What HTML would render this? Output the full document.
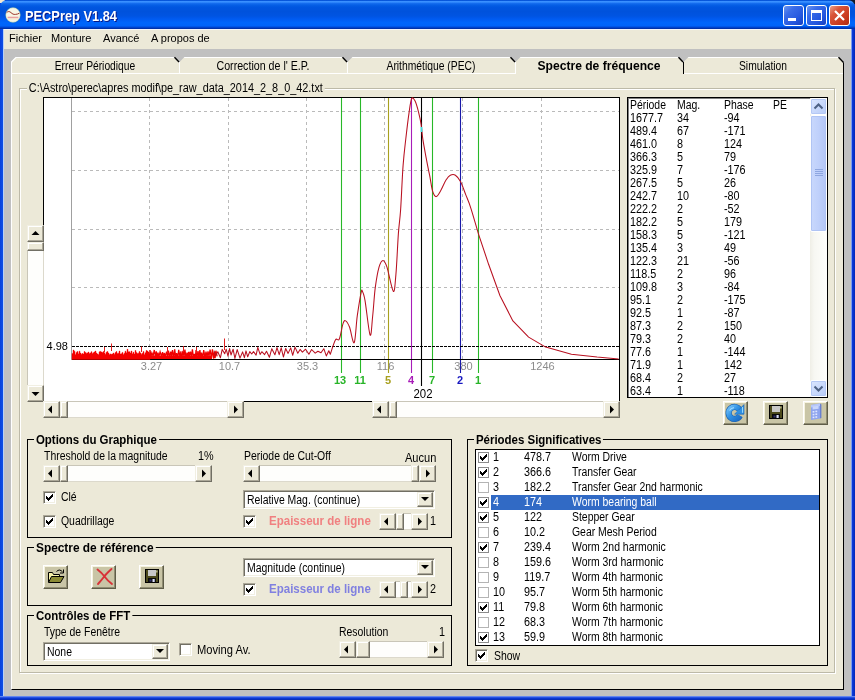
<!DOCTYPE html><html><head><meta charset="utf-8"><title>PECPrep V1.84</title><style>
html,body{margin:0;padding:0;}
body{width:855px;height:700px;overflow:hidden;background:#c0c0c0;position:relative;font-family:"Liberation Sans",sans-serif;font-size:12px;color:#000;}
div{position:absolute;box-sizing:border-box;}
.t{white-space:nowrap;line-height:14px;height:14px;}
.b{font-weight:bold;}
.btn{background:#ece9d8;border:1px solid;border-color:#f1efe2 #716f64 #716f64 #f1efe2;box-shadow:inset -1px -1px 0 #aca899, inset 1px 1px 0 #fff;}
.ibt{background:#c9c5a6;border:1px solid;border-color:#fff #5f5d48 #5f5d48 #fff;box-shadow:inset -1px -1px 0 #8f8c72, inset 1px 1px 0 #f6f3df;}
.trk{background:#fefefc;border-top:1px solid #c9c6b8;border-bottom:1px solid #dcd9cc;}
.vtrk{background:#fefefc;border-left:1px solid #c9c6b8;border-right:1px solid #dcd9cc;}
.sunk{background:#fff;border:1px solid;border-color:#aca899 #fff #fff #aca899;box-shadow:inset 1px 1px 0 #716f64, inset -1px -1px 0 #f1efe2;}
.gb{border:1px solid #000;}
.cap{background:#ece9d8;font-weight:bold;font-size:12px;white-space:nowrap;line-height:14px;height:14px;padding:0 2px;}
.cb{background:#fff;border:1px solid;border-color:#aca899 #fff #fff #aca899;box-shadow:inset 1px 1px 0 #716f64, inset -1px -1px 0 #f1efe2;}
svg{position:absolute;overflow:visible;}
</style></head><body><div id="wrap" style="left:0;top:0;width:855px;height:700px;will-change:transform;">
<div style="left:0;top:0;width:855px;height:700px;background:#0831d9;"></div>
<div style="left:3px;top:29px;width:849px;height:668px;background:#c0c0c0;"></div>
<div style="left:0;top:0;width:4px;height:700px;background:linear-gradient(90deg,#0840dc,#0c4ce4 60%,#1458ec 100%);"></div>
<div style="left:851px;top:29px;width:1px;height:668px;background:#7c9cec;"></div><div style="left:852px;top:0;width:3px;height:700px;background:linear-gradient(90deg,#0c3ce0,#0428b8);"></div>
<div style="left:0;top:696px;width:855px;height:4px;background:linear-gradient(#8aa8f4 0%,#3c64e8 25%,#0c3cdc 50%,#0428b0 100%);"></div>
<div style="left:0;top:0;width:5px;height:3px;background:#f4e8d0;"></div><div style="left:850px;top:0;width:5px;height:4px;background:#101828;"></div>
<div style="left:0;top:0;width:855px;height:29px;background:linear-gradient(#0050d0 0%,#0a5ae0 2.5%,#3a90ff 5%,#3088fc 8%,#146cee 12%,#0660e6 17%,#0056e0 24%,#0052dc 40%,#0054e2 55%,#005af0 65%,#0066fc 78%,#0064fa 88%,#0054e6 92%,#003cc0 96%,#002a98 100%);border-radius:7px 7px 0 0;"></div>
<svg style="left:5px;top:7px" width="16" height="16" viewBox="0 0 16 16"><circle cx="8" cy="8" r="7.4" fill="#f8f6e6" stroke="#5c9a86" stroke-opacity="0.55" stroke-width="0.7"/><path d="M1.6 5.6 C3 4.2,4.6 4.2,6 5.6 S8.6 7.6,10.4 7.4 S13 7,14.4 6.2" stroke="#9c3428" stroke-width="1" fill="none"/><path d="M2.6 10.5 H13.4" stroke="#eaa0a0" stroke-width="1.6"/><path d="M3 12.2 H13" stroke="#f4ecd0" stroke-width="1"/></svg>
<div class="t" style="left:25px;top:8px;transform:scaleX(0.916);transform-origin:0 0;color:#fff;font-weight:bold;font-size:14px;line-height:16px;height:16px;text-shadow:1px 1px 0 #0a1883;">PECPrep V1.84</div>
<div style="left:783px;top:5px;width:21px;height:21px;border:1px solid #fff;border-radius:3px;background:linear-gradient(135deg,#6a96f0 0%,#3a6ce8 30%,#2456de 70%,#1840c0 100%);"></div>
<div style="left:806px;top:5px;width:21px;height:21px;border:1px solid #fff;border-radius:3px;background:linear-gradient(135deg,#6a96f0 0%,#3a6ce8 30%,#2456de 70%,#1840c0 100%);"></div>
<div style="left:829px;top:5px;width:21px;height:21px;border:1px solid #fff;border-radius:3px;background:linear-gradient(135deg,#e9a08a 0%,#d9553a 30%,#c93a1e 70%,#b02c12 100%);"></div>
<div style="left:788px;top:18px;width:8px;height:3px;background:#fff;"></div>
<div style="left:811px;top:10px;width:11px;height:11px;border:1px solid #fff;border-top-width:3px;"></div>
<svg style="left:829px;top:5px" width="21" height="21"><path d="M6 6 L15 15 M15 6 L6 15" stroke="#fff" stroke-width="2.2" stroke-linecap="butt"/></svg>
<div class="" style="left:4px;top:29px;width:847px;height:20px;background:#ece9d8;border-top:1px solid #f4f6fb;"></div>
<div style="left:3px;top:29px;width:1px;height:667px;background:#b8d0f8;"></div>
<div class="t" style="left:9px;top:31px;font-size:11px;">Fichier</div>
<div class="t" style="left:51px;top:31px;font-size:11px;">Monture</div>
<div class="t" style="left:103px;top:31px;font-size:11px;">Avancé</div>
<div class="t" style="left:151px;top:31px;font-size:11px;">A propos de</div>
<div class="" style="left:11px;top:73px;width:833px;height:617px;background:#ece9d8;border:1px solid;border-color:#ece9d8 #000 #000 #fff;"></div>
<div class="" style="left:11px;top:57px;width:833px;height:17px;background:#ece9d8;"></div>
<div class="" style="left:11px;top:57px;width:833px;height:1px;background:#fff;"></div>
<div class="" style="left:11px;top:57px;width:1px;height:17px;background:#fff;"></div>
<div class="" style="left:11px;top:73px;width:504px;height:1px;background:#fff;"></div>
<div class="" style="left:684px;top:73px;width:159px;height:1px;background:#fff;"></div>
<div class="t" style="left:11px;top:59px;width:168px;text-align:center;transform:scaleX(0.856);transform-origin:50% 0;">Erreur Périodique</div>
<div class="t" style="left:179px;top:59px;width:168px;text-align:center;transform:scaleX(0.888);transform-origin:50% 0;">Correction de l' E.P.</div>
<div class="t" style="left:347px;top:59px;width:168px;text-align:center;transform:scaleX(0.861);transform-origin:50% 0;">Arithmétique (PEC)</div>
<div class="t" style="left:515px;top:59px;width:168px;text-align:center;transform:scaleX(1.008);transform-origin:50% 0;font-weight:bold;">Spectre de fréquence</div>
<div class="t" style="left:683px;top:59px;width:160px;text-align:center;transform:scaleX(0.857);transform-origin:50% 0;">Simulation</div>
<svg style="left:0;top:0" width="855" height="700"><path d="M173.5 57 H184.5 L179 62.5 Z" fill="#c0c0c0"/><path d="M174.5 57.2 L179 62" stroke="#000" stroke-width="1.3"/><path d="M179.5 62 V74" stroke="#fff" stroke-width="1"/><path d="M341.5 57 H352.5 L347 62.5 Z" fill="#c0c0c0"/><path d="M342.5 57.2 L347 62" stroke="#000" stroke-width="1.3"/><path d="M347.5 62 V74" stroke="#fff" stroke-width="1"/><path d="M509.5 57 H520.5 L515 62.5 Z" fill="#c0c0c0"/><path d="M510.5 57.2 L515 62" stroke="#000" stroke-width="1.3"/><path d="M515.5 62 V74" stroke="#fff" stroke-width="1"/><path d="M677.5 57 H688.5 L683 62.5 Z" fill="#c0c0c0"/><path d="M678.5 57.2 L683 62" stroke="#000" stroke-width="1.3"/><path d="M683.5 62 V74" stroke="#000" stroke-width="1"/><path d="M11 57 H16 L11 62 Z" fill="#c0c0c0"/><path d="M11.5 62 L16 57.5" stroke="#fff" stroke-width="1.2"/><path d="M843.5 62 V74" stroke="#000" stroke-width="1"/><path d="M838 57 H844 V63 Z" fill="#c0c0c0"/><path d="M838.5 57.2 L843.5 62.5" stroke="#000" stroke-width="1.3"/></svg>
<div class="" style="left:19px;top:88px;width:816px;height:585px;border:1px solid #bdbaa8;box-shadow:1px 1px 0 #fff, inset 1px 1px 0 #fff;"></div>
<div class="t" style="left:27px;top:81px;transform:scaleX(0.905);transform-origin:0 0;background:#ece9d8;padding:0 2px;font-size:12px;">C:\Astro\perec\apres modif\pe_raw_data_2014_2_8_0_42.txt</div>
<div class="" style="left:43px;top:97px;width:577px;height:305px;background:#fff;border:1px solid #000;"></div>
<svg style="left:0;top:0" width="855" height="700" viewBox="0 0 855 700"><path d="M72 111.5 H619" stroke="#bababa" stroke-width="1" stroke-dasharray="3 3"/><path d="M72 170.5 H619" stroke="#bababa" stroke-width="1" stroke-dasharray="3 3"/><path d="M72 229.5 H619" stroke="#bababa" stroke-width="1" stroke-dasharray="3 3"/><path d="M72 287.5 H619" stroke="#bababa" stroke-width="1" stroke-dasharray="3 3"/><path d="M149.5 98 V359" stroke="#bababa" stroke-width="1" stroke-dasharray="3 3"/><path d="M228.5 98 V359" stroke="#bababa" stroke-width="1" stroke-dasharray="3 3"/><path d="M306.5 98 V359" stroke="#bababa" stroke-width="1" stroke-dasharray="3 3"/><path d="M384.5 98 V359" stroke="#bababa" stroke-width="1" stroke-dasharray="3 3"/><path d="M462.5 98 V359" stroke="#bababa" stroke-width="1" stroke-dasharray="3 3"/><path d="M541.5 98 V359" stroke="#bababa" stroke-width="1" stroke-dasharray="3 3"/><path d="M71.5 98 V360" stroke="#a0a0a0" stroke-width="1"/><path d="M341.5 98 V373" stroke="#28b828" stroke-width="1.1"/><path d="M360.5 98 V373" stroke="#28b828" stroke-width="1.1"/><path d="M388.5 98 V373" stroke="#a8a020" stroke-width="1.1"/><path d="M411.5 98 V373" stroke="#a81cb8" stroke-width="1.1"/><path d="M421.5 98 V386" stroke="#000" stroke-width="1.1"/><path d="M432.5 98 V373" stroke="#28b828" stroke-width="1.1"/><path d="M460.5 98 V373" stroke="#1818a8" stroke-width="1.1"/><path d="M478.5 98 V373" stroke="#28b828" stroke-width="1.1"/><path d="M72 359.5 H619" stroke="#000" stroke-width="1"/><path d="M72 346.5 H619" stroke="#000" stroke-width="1" stroke-dasharray="3 1"/><path d="M72 359.5 L72.0 353.4 L73.0 353.4 L73.0 350.1 L74.0 350.1 L74.0 351.2 L75.0 351.2 L75.0 354.4 L76.0 354.4 L76.0 352.4 L77.0 352.4 L77.0 351.6 L78.0 351.6 L78.0 353.7 L79.0 353.7 L79.0 351.2 L80.0 351.2 L80.0 353.1 L81.0 353.1 L81.0 354.3 L82.0 354.3 L82.0 353.5 L83.0 353.5 L83.0 354.1 L84.0 354.1 L84.0 351.6 L85.0 351.6 L85.0 352.5 L86.0 352.5 L86.0 353.2 L87.0 353.2 L87.0 352.9 L88.0 352.9 L88.0 352.1 L89.0 352.1 L89.0 353.4 L90.0 353.4 L90.0 352.9 L91.0 352.9 L91.0 351.7 L92.0 351.7 L92.0 353.6 L93.0 353.6 L93.0 352.7 L94.0 352.7 L94.0 351.9 L95.0 351.9 L95.0 351.1 L96.0 351.1 L96.0 353.0 L97.0 353.0 L97.0 354.0 L98.0 354.0 L98.0 354.4 L99.0 354.4 L99.0 351.8 L100.0 351.8 L100.0 351.4 L101.0 351.4 L101.0 352.1 L102.0 352.1 L102.0 352.5 L103.0 352.5 L103.0 351.6 L104.0 351.6 L104.0 352.8 L105.0 352.8 L105.0 354.3 L106.0 354.3 L106.0 352.2 L107.0 352.2 L107.0 351.6 L108.0 351.6 L108.0 353.1 L109.0 353.1 L109.0 354.4 L110.0 354.4 L110.0 353.9 L111.0 353.9 L111.0 354.3 L112.0 354.3 L112.0 354.0 L113.0 354.0 L113.0 353.1 L114.0 353.1 L114.0 354.2 L115.0 354.2 L115.0 352.6 L116.0 352.6 L116.0 351.6 L117.0 351.6 L117.0 353.5 L118.0 353.5 L118.0 353.2 L119.0 353.2 L119.0 351.1 L120.0 351.1 L120.0 353.9 L121.0 353.9 L121.0 353.7 L122.0 353.7 L122.0 352.4 L123.0 352.4 L123.0 354.5 L124.0 354.5 L124.0 353.2 L125.0 353.2 L125.0 351.2 L126.0 351.2 L126.0 352.7 L127.0 352.7 L127.0 349.3 L128.0 349.3 L128.0 351.8 L129.0 351.8 L129.0 351.7 L130.0 351.7 L130.0 353.1 L131.0 353.1 L131.0 351.1 L132.0 351.1 L132.0 353.8 L133.0 353.8 L133.0 352.3 L134.0 352.3 L134.0 354.0 L135.0 354.0 L135.0 350.5 L136.0 350.5 L136.0 352.4 L137.0 352.4 L137.0 353.6 L138.0 353.6 L138.0 353.2 L139.0 353.2 L139.0 351.5 L140.0 351.5 L140.0 352.9 L141.0 352.9 L141.0 354.2 L142.0 354.2 L142.0 353.3 L143.0 353.3 L143.0 351.6 L144.0 351.6 L144.0 354.4 L145.0 354.4 L145.0 352.7 L146.0 352.7 L146.0 350.5 L147.0 350.5 L147.0 351.1 L148.0 351.1 L148.0 352.1 L149.0 352.1 L149.0 353.2 L150.0 353.2 L150 359.5 Z" fill="#f40000" stroke="#f40000" stroke-width="0.4"/><path d="M150 359 L150.0 350.1 L151.0 356.7 L151.9 352.9 L153.1 356.0 L154.3 350.0 L155.5 356.8 L156.3 351.4 L157.3 358.9 L158.0 352.6 L158.8 356.9 L160.1 351.8 L161.4 356.0 L162.6 352.2 L163.5 358.3 L164.3 353.0 L165.4 356.3 L166.6 351.6 L167.7 356.6 L168.4 350.7 L169.7 356.7 L170.8 351.6 L171.6 356.6 L172.5 350.0 L173.8 357.8 L174.7 349.3 L175.9 358.5 L176.6 353.2 L177.9 356.6 L178.7 349.9 L180.0 357.0 L180.9 351.3 L181.7 359.0 L182.9 350.8 L184.0 356.2 L184.9 349.6 L186.1 358.4 L187.0 352.5 L187.8 357.2 L188.7 351.9 L189.4 356.3 L190.4 351.7 L191.4 356.3 L192.4 349.4 L193.4 357.4 L194.4 353.9 L195.3 358.5 L196.0 350.0 L196.8 357.6 L198.0 351.2 L198.9 357.4 L199.9 350.1 L200.7 357.3 L201.5 352.6 L202.7 357.5 L203.7 350.2 L205.0 357.7 L206.0 351.5 L207.0 356.9 L208.0 351.3 L209.0 356.2 L210.1 349.6 L211.4 358.2 L212.4 349.3 L213.6 358.6 L214.4 351.8 L215.1 358.3 L215.9 350.7 L217.1 356.3" fill="none" stroke="#f00000" stroke-width="1.3"/><rect x="150" y="355.5" width="62" height="3.5" fill="#f40000"/><path d="M111.5 351 V343.5 M224.5 350 V338.5 M104.5 352 V347 M141.5 352 V346.5 M167.5 352 V347 M183.5 352 V346 M196.5 352 V347" stroke="#e02020" stroke-width="1"/><path d="M214.0 350.6 L215.4 355.7 L217.8 351.8 L220.4 357.8 L222.2 349.4 L224.7 353.8 L226.2 349.2 L228.0 356.1 L229.6 348.6 L231.0 355.0 L233.1 349.2 L234.9 358.4 L237.2 349.6 L240.0 358.1 L242.6 351.9 L244.4 357.7 L246.0 350.9 L247.7 356.8 L249.8 351.6 L251.7 354.0 L253.5 351.6 L256.1 355.1 L257.8 347.3 L260.1 354.4 L261.8 351.7 L264.6 354.6 L266.5 351.3 L269.4 357.3 L271.8 348.7 L274.9 354.8 L277.0 347.6 L279.2 354.7 L281.2 347.8 L283.4 357.0 L285.7 348.5 L288.1 353.4 L290.7 347.9 L292.7 355.3 L295.0 347.1 L297.8 353.3 L300.1 349.4 L302.4 352.1 L305.6 349.2 L308.9 354.2 L311.6 349.5 L315.2 353.1 L317.9 351.2 L321.0 352.8 L323.8 348.7 L326.3 355.9 L328.8 350.7 L330.3 354.3  C331.1 351.9,333.9 342.6,335.4 340.0 C336.9 337.4,338.0 341.8,339.3 339.0 C340.6 336.2,342.0 326.4,343.1 323.4 C344.2 320.4,344.6 320.2,345.7 320.9 C346.8 321.5,348.2 323.7,349.6 327.3 C351.0 330.9,352.9 344.6,354.2 342.7 C355.5 340.8,356.1 324.0,357.3 315.7 C358.5 307.4,360.2 296.7,361.1 292.6 C362.0 288.5,361.8 290.0,362.4 291.3 C363.0 292.6,363.7 293.0,365.0 300.3 C366.3 307.6,368.8 332.4,370.1 335.0 C371.4 337.6,371.8 323.6,372.7 315.7 C373.6 307.8,374.2 295.5,375.3 287.4 C376.4 279.3,377.8 271.4,379.1 266.9 C380.4 262.4,381.7 260.4,383.0 260.4 C384.3 260.4,385.2 261.8,386.9 266.9 C388.6 272.0,391.8 290.0,393.3 291.3 C394.8 292.6,395.0 284.2,395.9 274.6 C396.8 265.0,397.6 244.2,398.4 233.4 C399.2 222.6,399.8 221.3,400.6 210.0 C401.4 198.7,402.2 177.1,403.1 165.4 C404.0 153.7,404.7 148.5,405.7 139.7 C406.7 130.8,408.1 119.1,409.1 112.3 C410.1 105.5,410.7 100.5,411.7 98.6 C412.7 96.7,414.0 98.8,415.1 101.1 C416.2 103.4,417.6 108.4,418.6 112.3 C419.6 116.2,420.4 119.7,421.1 124.3 C421.8 128.9,422.0 134.0,422.9 139.7 C423.8 145.4,425.2 152.6,426.3 158.6 C427.4 164.6,428.6 170.3,429.7 175.7 C430.8 181.1,431.5 187.6,432.6 191.1 C433.7 194.6,434.8 196.7,436.2 196.6 C437.6 196.5,439.3 193.1,440.9 190.3 C442.5 187.5,444.4 182.5,446.0 180.0 C447.6 177.5,448.7 176.0,450.3 175.2 C451.9 174.4,453.7 174.1,455.4 175.2 C457.1 176.3,458.9 178.5,460.6 181.7 C462.3 184.9,464.0 190.2,465.7 194.6 C467.4 199.0,468.8 201.7,470.9 208.3 C473.0 214.9,477.3 230.0,478.6 234.3 L488.6 264.3 L500 295.7 L512.9 320.9 L528.6 337.1 L545.7 347.1 L571.4 354.3 L597.1 357.1 L618.6 358.9" stroke="#b81020" stroke-width="1.05" fill="none" stroke-linejoin="round"/><rect x="420.6" y="127" width="1.8" height="5" fill="#40e0e0"/></svg>
<div class="t" style="left:44px;top:339px;font-size:11px;width:24px;text-align:right;">4.98</div>
<div class="t" style="left:131.5px;top:359px;font-size:11px;width:40px;text-align:center;color:#8c8c8c;">3.27</div>
<div class="t" style="left:209.5px;top:359px;font-size:11px;width:40px;text-align:center;color:#8c8c8c;">10.7</div>
<div class="t" style="left:287.5px;top:359px;font-size:11px;width:40px;text-align:center;color:#8c8c8c;">35.3</div>
<div class="t" style="left:365.5px;top:359px;font-size:11px;width:40px;text-align:center;color:#8c8c8c;">116</div>
<div class="t" style="left:443.5px;top:359px;font-size:11px;width:40px;text-align:center;color:#8c8c8c;">380</div>
<div class="t" style="left:522.5px;top:359px;font-size:11px;width:40px;text-align:center;color:#8c8c8c;">1246</div>
<div class="t" style="left:325px;top:373px;font-size:11px;width:30px;text-align:center;color:#28b428;font-weight:bold;">13</div>
<div class="t" style="left:345px;top:373px;font-size:11px;width:30px;text-align:center;color:#28b428;font-weight:bold;">11</div>
<div class="t" style="left:373px;top:373px;font-size:11px;width:30px;text-align:center;color:#a8a020;font-weight:bold;">5</div>
<div class="t" style="left:396px;top:373px;font-size:11px;width:30px;text-align:center;color:#a81cb8;font-weight:bold;">4</div>
<div class="t" style="left:417px;top:373px;font-size:11px;width:30px;text-align:center;color:#28b428;font-weight:bold;">7</div>
<div class="t" style="left:445px;top:373px;font-size:11px;width:30px;text-align:center;color:#1818c0;font-weight:bold;">2</div>
<div class="t" style="left:463px;top:373px;font-size:11px;width:30px;text-align:center;color:#28b428;font-weight:bold;">1</div>
<div class="t" style="left:402.5px;top:387px;transform:scaleX(0.95);transform-origin:50% 0;font-size:12px;width:40px;text-align:center;">202</div>
<div class="vtrk" style="left:27px;top:225px;width:17px;height:177px;"></div>
<div class="btn" style="left:27px;top:225px;width:17px;height:17px;"></div>
<svg style="left:0;top:0" width="855" height="700"><path d="M31.5 235.0 L35.5 231.0 L39.5 235.0 Z" fill="#000"/></svg>
<div class="btn" style="left:27px;top:385px;width:17px;height:17px;"></div>
<svg style="left:0;top:0" width="855" height="700"><path d="M31.5 392.0 L35.5 396.0 L39.5 392.0 Z" fill="#000"/></svg>
<div class="btn" style="left:27px;top:242px;width:17px;height:9px;"></div>
<div class="trk" style="left:43px;top:401px;width:201px;height:17px;"></div>
<div class="btn" style="left:43px;top:401px;width:17px;height:17px;"></div>
<svg style="left:0;top:0" width="855" height="700"><path d="M52.0 405.5 L48.0 409.5 L52.0 413.5 Z" fill="#000"/></svg>
<div class="btn" style="left:227px;top:401px;width:17px;height:17px;"></div>
<svg style="left:0;top:0" width="855" height="700"><path d="M234.0 405.5 L238.0 409.5 L234.0 413.5 Z" fill="#000"/></svg>
<div class="btn" style="left:60px;top:401px;width:8px;height:17px;"></div>
<div class="trk" style="left:372px;top:401px;width:248px;height:17px;"></div>
<div class="btn" style="left:372px;top:401px;width:17px;height:17px;"></div>
<svg style="left:0;top:0" width="855" height="700"><path d="M381.0 405.5 L377.0 409.5 L381.0 413.5 Z" fill="#000"/></svg>
<div class="btn" style="left:603px;top:401px;width:17px;height:17px;"></div>
<svg style="left:0;top:0" width="855" height="700"><path d="M610.0 405.5 L614.0 409.5 L610.0 413.5 Z" fill="#000"/></svg>
<div class="btn" style="left:389px;top:401px;width:8px;height:17px;"></div>
<div class="" style="left:627px;top:97px;width:201px;height:301px;background:#fff;border:1px solid #000;box-shadow:inset 1px 1px 0 #808080;"></div>
<div class="t" style="left:630px;top:98px;transform:scaleX(0.87);transform-origin:0 0;font-size:12px;">Période</div>
<div class="t" style="left:677px;top:98px;transform:scaleX(0.87);transform-origin:0 0;font-size:12px;">Mag.</div>
<div class="t" style="left:724px;top:98px;transform:scaleX(0.87);transform-origin:0 0;font-size:12px;">Phase</div>
<div class="t" style="left:773px;top:98px;transform:scaleX(0.87);transform-origin:0 0;font-size:12px;">PE</div>
<div class="t" style="left:630px;top:111px;transform:scaleX(0.9);transform-origin:0 0;font-size:12px;">1677.7</div>
<div class="t" style="left:677px;top:111px;transform:scaleX(0.9);transform-origin:0 0;font-size:12px;">34</div>
<div class="t" style="left:724px;top:111px;transform:scaleX(0.9);transform-origin:0 0;font-size:12px;">-94</div>
<div class="t" style="left:630px;top:124px;transform:scaleX(0.9);transform-origin:0 0;font-size:12px;">489.4</div>
<div class="t" style="left:677px;top:124px;transform:scaleX(0.9);transform-origin:0 0;font-size:12px;">67</div>
<div class="t" style="left:724px;top:124px;transform:scaleX(0.9);transform-origin:0 0;font-size:12px;">-171</div>
<div class="t" style="left:630px;top:137px;transform:scaleX(0.9);transform-origin:0 0;font-size:12px;">461.0</div>
<div class="t" style="left:677px;top:137px;transform:scaleX(0.9);transform-origin:0 0;font-size:12px;">8</div>
<div class="t" style="left:724px;top:137px;transform:scaleX(0.9);transform-origin:0 0;font-size:12px;">124</div>
<div class="t" style="left:630px;top:150px;transform:scaleX(0.9);transform-origin:0 0;font-size:12px;">366.3</div>
<div class="t" style="left:677px;top:150px;transform:scaleX(0.9);transform-origin:0 0;font-size:12px;">5</div>
<div class="t" style="left:724px;top:150px;transform:scaleX(0.9);transform-origin:0 0;font-size:12px;">79</div>
<div class="t" style="left:630px;top:163px;transform:scaleX(0.9);transform-origin:0 0;font-size:12px;">325.9</div>
<div class="t" style="left:677px;top:163px;transform:scaleX(0.9);transform-origin:0 0;font-size:12px;">7</div>
<div class="t" style="left:724px;top:163px;transform:scaleX(0.9);transform-origin:0 0;font-size:12px;">-176</div>
<div class="t" style="left:630px;top:176px;transform:scaleX(0.9);transform-origin:0 0;font-size:12px;">267.5</div>
<div class="t" style="left:677px;top:176px;transform:scaleX(0.9);transform-origin:0 0;font-size:12px;">5</div>
<div class="t" style="left:724px;top:176px;transform:scaleX(0.9);transform-origin:0 0;font-size:12px;">26</div>
<div class="t" style="left:630px;top:189px;transform:scaleX(0.9);transform-origin:0 0;font-size:12px;">242.7</div>
<div class="t" style="left:677px;top:189px;transform:scaleX(0.9);transform-origin:0 0;font-size:12px;">10</div>
<div class="t" style="left:724px;top:189px;transform:scaleX(0.9);transform-origin:0 0;font-size:12px;">-80</div>
<div class="t" style="left:630px;top:202px;transform:scaleX(0.9);transform-origin:0 0;font-size:12px;">222.2</div>
<div class="t" style="left:677px;top:202px;transform:scaleX(0.9);transform-origin:0 0;font-size:12px;">2</div>
<div class="t" style="left:724px;top:202px;transform:scaleX(0.9);transform-origin:0 0;font-size:12px;">-52</div>
<div class="t" style="left:630px;top:215px;transform:scaleX(0.9);transform-origin:0 0;font-size:12px;">182.2</div>
<div class="t" style="left:677px;top:215px;transform:scaleX(0.9);transform-origin:0 0;font-size:12px;">5</div>
<div class="t" style="left:724px;top:215px;transform:scaleX(0.9);transform-origin:0 0;font-size:12px;">179</div>
<div class="t" style="left:630px;top:228px;transform:scaleX(0.9);transform-origin:0 0;font-size:12px;">158.3</div>
<div class="t" style="left:677px;top:228px;transform:scaleX(0.9);transform-origin:0 0;font-size:12px;">5</div>
<div class="t" style="left:724px;top:228px;transform:scaleX(0.9);transform-origin:0 0;font-size:12px;">-121</div>
<div class="t" style="left:630px;top:241px;transform:scaleX(0.9);transform-origin:0 0;font-size:12px;">135.4</div>
<div class="t" style="left:677px;top:241px;transform:scaleX(0.9);transform-origin:0 0;font-size:12px;">3</div>
<div class="t" style="left:724px;top:241px;transform:scaleX(0.9);transform-origin:0 0;font-size:12px;">49</div>
<div class="t" style="left:630px;top:254px;transform:scaleX(0.9);transform-origin:0 0;font-size:12px;">122.3</div>
<div class="t" style="left:677px;top:254px;transform:scaleX(0.9);transform-origin:0 0;font-size:12px;">21</div>
<div class="t" style="left:724px;top:254px;transform:scaleX(0.9);transform-origin:0 0;font-size:12px;">-56</div>
<div class="t" style="left:630px;top:267px;transform:scaleX(0.9);transform-origin:0 0;font-size:12px;">118.5</div>
<div class="t" style="left:677px;top:267px;transform:scaleX(0.9);transform-origin:0 0;font-size:12px;">2</div>
<div class="t" style="left:724px;top:267px;transform:scaleX(0.9);transform-origin:0 0;font-size:12px;">96</div>
<div class="t" style="left:630px;top:280px;transform:scaleX(0.9);transform-origin:0 0;font-size:12px;">109.8</div>
<div class="t" style="left:677px;top:280px;transform:scaleX(0.9);transform-origin:0 0;font-size:12px;">3</div>
<div class="t" style="left:724px;top:280px;transform:scaleX(0.9);transform-origin:0 0;font-size:12px;">-84</div>
<div class="t" style="left:630px;top:293px;transform:scaleX(0.9);transform-origin:0 0;font-size:12px;">95.1</div>
<div class="t" style="left:677px;top:293px;transform:scaleX(0.9);transform-origin:0 0;font-size:12px;">2</div>
<div class="t" style="left:724px;top:293px;transform:scaleX(0.9);transform-origin:0 0;font-size:12px;">-175</div>
<div class="t" style="left:630px;top:306px;transform:scaleX(0.9);transform-origin:0 0;font-size:12px;">92.5</div>
<div class="t" style="left:677px;top:306px;transform:scaleX(0.9);transform-origin:0 0;font-size:12px;">1</div>
<div class="t" style="left:724px;top:306px;transform:scaleX(0.9);transform-origin:0 0;font-size:12px;">-87</div>
<div class="t" style="left:630px;top:319px;transform:scaleX(0.9);transform-origin:0 0;font-size:12px;">87.3</div>
<div class="t" style="left:677px;top:319px;transform:scaleX(0.9);transform-origin:0 0;font-size:12px;">2</div>
<div class="t" style="left:724px;top:319px;transform:scaleX(0.9);transform-origin:0 0;font-size:12px;">150</div>
<div class="t" style="left:630px;top:332px;transform:scaleX(0.9);transform-origin:0 0;font-size:12px;">79.3</div>
<div class="t" style="left:677px;top:332px;transform:scaleX(0.9);transform-origin:0 0;font-size:12px;">2</div>
<div class="t" style="left:724px;top:332px;transform:scaleX(0.9);transform-origin:0 0;font-size:12px;">40</div>
<div class="t" style="left:630px;top:345px;transform:scaleX(0.9);transform-origin:0 0;font-size:12px;">77.6</div>
<div class="t" style="left:677px;top:345px;transform:scaleX(0.9);transform-origin:0 0;font-size:12px;">1</div>
<div class="t" style="left:724px;top:345px;transform:scaleX(0.9);transform-origin:0 0;font-size:12px;">-144</div>
<div class="t" style="left:630px;top:358px;transform:scaleX(0.9);transform-origin:0 0;font-size:12px;">71.9</div>
<div class="t" style="left:677px;top:358px;transform:scaleX(0.9);transform-origin:0 0;font-size:12px;">1</div>
<div class="t" style="left:724px;top:358px;transform:scaleX(0.9);transform-origin:0 0;font-size:12px;">142</div>
<div class="t" style="left:630px;top:371px;transform:scaleX(0.9);transform-origin:0 0;font-size:12px;">68.4</div>
<div class="t" style="left:677px;top:371px;transform:scaleX(0.9);transform-origin:0 0;font-size:12px;">2</div>
<div class="t" style="left:724px;top:371px;transform:scaleX(0.9);transform-origin:0 0;font-size:12px;">27</div>
<div class="t" style="left:630px;top:384px;transform:scaleX(0.9);transform-origin:0 0;font-size:12px;">63.4</div>
<div class="t" style="left:677px;top:384px;transform:scaleX(0.9);transform-origin:0 0;font-size:12px;">1</div>
<div class="t" style="left:724px;top:384px;transform:scaleX(0.9);transform-origin:0 0;font-size:12px;">-118</div>
<div class="" style="left:810px;top:98px;width:17px;height:299px;background:linear-gradient(90deg,#efeee6 0,#f7f7f2 25%,#fefefb 100%);"></div>
<div class="" style="left:810px;top:98px;width:17px;height:17px;background:linear-gradient(135deg,#dbe6ff,#b8ccf8);border:1px solid #fff;border-radius:2px;box-shadow:inset 0 0 0 1px #b5c8f5;"></div>
<div class="" style="left:810px;top:380px;width:17px;height:17px;background:linear-gradient(135deg,#dbe6ff,#b8ccf8);border:1px solid #fff;border-radius:2px;box-shadow:inset 0 0 0 1px #b5c8f5;"></div>
<svg style="left:810px;top:98px" width="17" height="17"><path d="M4.5 10.5 L8.5 6.5 L12.5 10.5" stroke="#4d6185" stroke-width="2" fill="none"/></svg>
<svg style="left:810px;top:380px" width="17" height="17"><path d="M4.5 6.5 L8.5 10.5 L12.5 6.5" stroke="#4d6185" stroke-width="2" fill="none"/></svg>
<div class="" style="left:810px;top:115px;width:17px;height:117px;background:linear-gradient(90deg,#c9d8fc,#bfd0fb 50%,#b4c6f6);border:1px solid #fff;border-radius:2px;box-shadow:inset 0 0 0 1px #b0c4f4;"></div>
<div class="" style="left:814.5px;top:169px;width:8px;height:1px;background:#8ea6e0;"></div>
<div class="" style="left:814.5px;top:171px;width:8px;height:1px;background:#8ea6e0;"></div>
<div class="" style="left:814.5px;top:173px;width:8px;height:1px;background:#8ea6e0;"></div>
<div class="" style="left:814.5px;top:175px;width:8px;height:1px;background:#8ea6e0;"></div>
<div class="ibt" style="left:723px;top:401px;width:25px;height:24px;"></div>
<div class="ibt" style="left:763px;top:401px;width:25px;height:24px;"></div>
<div class="ibt" style="left:803px;top:401px;width:25px;height:24px;"></div>
<svg style="left:723px;top:401px" width="25" height="24" viewBox="0 0 25 24"><defs><linearGradient id="rg" x1="0" y1="0" x2="1" y2="1"><stop offset="0" stop-color="#6fc0f8"/><stop offset="0.45" stop-color="#2f90e4"/><stop offset="1" stop-color="#1c6ec8"/></linearGradient></defs><path d="M16.9 14.8 A6 6 0 1 1 16.6 8.6" fill="none" stroke="#1c62b0" stroke-width="6.2"/><path d="M16.9 14.8 A6 6 0 1 1 16.6 8.6" fill="none" stroke="url(#rg)" stroke-width="5"/><path d="M21 3.6 V13.2 H11.6 Z" fill="#2f8fe2" stroke="#1c62b0" stroke-width="0.6"/><path d="M12.2 12.6 L16 8.6 L15 12.8 Z" fill="#2f8fe2"/><path d="M19.6 6 V11.8" stroke="#9fe0ff" stroke-width="1"/><path d="M6.5 9.5 A6 6 0 0 1 11 6.6" fill="none" stroke="#9cd8ff" stroke-width="1.2"/></svg>
<svg style="left:769px;top:405px" width="15" height="15" viewBox="0 0 15 15"><rect x="0.5" y="0.5" width="13" height="13" fill="#4c4a1c" stroke="#000"/><rect x="3" y="1" width="8" height="6" fill="#c8c8c8"/><rect x="11.2" y="1.5" width="1.3" height="2" fill="#c8c8a0"/><rect x="3" y="9" width="8" height="4.5" fill="#0a0a0a"/><rect x="7.5" y="10" width="2.2" height="3" fill="#d8dcf8"/><rect x="4.5" y="10.5" width="2" height="2" fill="#303070"/></svg>
<svg style="left:808px;top:403px" width="16" height="18" viewBox="0 0 16 18"><path d="M3 2 L12 0.6 L12 15.4 L3 17 Z" fill="#8ea4ee"/><path d="M3 2 L12 0.6 L12 3 L3 4.4 Z" fill="#b8c8fa"/><rect x="4.6" y="3.2" width="6" height="3" fill="#c8d6fc" transform="skewY(-8) translate(0,1)"/><g fill="#dfe6ff"><rect x="4.6" y="8" width="1.8" height="1.6"/><rect x="7.4" y="7.6" width="1.8" height="1.6"/><rect x="4.6" y="10.8" width="1.8" height="1.6"/><rect x="7.4" y="10.4" width="1.8" height="1.6"/><rect x="4.6" y="13.6" width="1.8" height="1.6"/><rect x="7.4" y="13.2" width="1.8" height="1.6"/></g><path d="M12 0.6 L13.4 1.4 L13.4 15 L12 15.4 Z" fill="#6a80d0"/></svg>
<div class="gb" style="left:27px;top:439px;width:425px;height:99px;"></div>
<div class="cap" style="left:34px;top:433px;transform:scaleX(0.955);transform-origin:0 0;">Options du Graphique</div>
<div class="gb" style="left:27px;top:547px;width:425px;height:59px;"></div>
<div class="cap" style="left:34px;top:541px;transform:scaleX(0.99);transform-origin:0 0;">Spectre de référence</div>
<div class="gb" style="left:27px;top:615px;width:425px;height:51px;"></div>
<div class="cap" style="left:34px;top:609px;transform:scaleX(0.955);transform-origin:0 0;">Contrôles de FFT</div>
<div class="gb" style="left:467px;top:439px;width:361px;height:227px;"></div>
<div class="cap" style="left:474px;top:433px;transform:scaleX(0.955);transform-origin:0 0;">Périodes Significatives</div>
<div class="t" style="left:44px;top:449px;transform:scaleX(0.87);transform-origin:0 0;">Threshold de la magnitude</div>
<div class="t" style="left:198px;top:449px;transform:scaleX(0.9);transform-origin:0 0;">1%</div>
<div class="trk" style="left:43px;top:465px;width:169px;height:17px;"></div>
<div class="btn" style="left:43px;top:465px;width:17px;height:17px;"></div>
<svg style="left:0;top:0" width="855" height="700"><path d="M52.0 469.5 L48.0 473.5 L52.0 477.5 Z" fill="#000"/></svg>
<div class="btn" style="left:195px;top:465px;width:17px;height:17px;"></div>
<svg style="left:0;top:0" width="855" height="700"><path d="M202.0 469.5 L206.0 473.5 L202.0 477.5 Z" fill="#000"/></svg>
<div class="btn" style="left:60px;top:465px;width:8px;height:17px;"></div>
<div class="cb" style="left:43px;top:491px;width:13px;height:13px;"></div>
<svg style="left:43px;top:491px" width="13" height="13" shape-rendering="crispEdges"><path d="M3 5h1v3h-1z M4 6h1v3h-1z M5 7h1v3h-1z M6 6h1v3h-1z M7 5h1v3h-1z M8 4h1v3h-1z M9 3h1v3h-1z" fill="#000"/></svg>
<div class="t" style="left:61px;top:490px;transform:scaleX(0.87);transform-origin:0 0;">Clé</div>
<div class="cb" style="left:43px;top:515px;width:13px;height:13px;"></div>
<svg style="left:43px;top:515px" width="13" height="13" shape-rendering="crispEdges"><path d="M3 5h1v3h-1z M4 6h1v3h-1z M5 7h1v3h-1z M6 6h1v3h-1z M7 5h1v3h-1z M8 4h1v3h-1z M9 3h1v3h-1z" fill="#000"/></svg>
<div class="t" style="left:61px;top:514px;transform:scaleX(0.87);transform-origin:0 0;">Quadrillage</div>
<div class="t" style="left:244px;top:449px;transform:scaleX(0.87);transform-origin:0 0;">Periode de Cut-Off</div>
<div class="t" style="left:405px;top:451px;transform:scaleX(0.92);transform-origin:0 0;">Aucun</div>
<div class="trk" style="left:243px;top:465px;width:193px;height:17px;"></div>
<div class="btn" style="left:243px;top:465px;width:17px;height:17px;"></div>
<svg style="left:0;top:0" width="855" height="700"><path d="M252.0 469.5 L248.0 473.5 L252.0 477.5 Z" fill="#000"/></svg>
<div class="btn" style="left:419px;top:465px;width:17px;height:17px;"></div>
<svg style="left:0;top:0" width="855" height="700"><path d="M426.0 469.5 L430.0 473.5 L426.0 477.5 Z" fill="#000"/></svg>
<div class="btn" style="left:411px;top:465px;width:8px;height:17px;"></div>
<div class="sunk" style="left:243px;top:490px;width:192px;height:19px;"></div>
<div class="t" style="left:247px;top:493px;transform:scaleX(0.87);transform-origin:0 0;font-size:12px;">Relative Mag. (continue)</div>
<div class="btn" style="left:417px;top:492px;width:16px;height:15px;"></div>
<svg style="left:0;top:0" width="855" height="700"><path d="M421 497 L425 501 L429 497 Z" fill="#000"/></svg>
<div class="cb" style="left:243px;top:515px;width:13px;height:13px;"></div>
<svg style="left:243px;top:515px" width="13" height="13" shape-rendering="crispEdges"><path d="M3 5h1v3h-1z M4 6h1v3h-1z M5 7h1v3h-1z M6 6h1v3h-1z M7 5h1v3h-1z M8 4h1v3h-1z M9 3h1v3h-1z" fill="#000"/></svg>
<div class="t" style="left:269px;top:514px;transform:scaleX(0.96);transform-origin:0 0;font-weight:bold;color:#f08080;">Epaisseur de ligne</div>
<div class="trk" style="left:379px;top:513px;width:49px;height:17px;"></div>
<div class="btn" style="left:379px;top:513px;width:17px;height:17px;"></div>
<svg style="left:0;top:0" width="855" height="700"><path d="M388.0 517.5 L384.0 521.5 L388.0 525.5 Z" fill="#000"/></svg>
<div class="btn" style="left:411px;top:513px;width:17px;height:17px;"></div>
<svg style="left:0;top:0" width="855" height="700"><path d="M418.0 517.5 L422.0 521.5 L418.0 525.5 Z" fill="#000"/></svg>
<div class="btn" style="left:396px;top:513px;width:8px;height:17px;"></div>
<div class="t" style="left:430px;top:514px;transform:scaleX(0.9);transform-origin:0 0;">1</div>
<div class="ibt" style="left:43px;top:565px;width:25px;height:24px;"></div>
<div class="ibt" style="left:91px;top:565px;width:25px;height:24px;"></div>
<div class="ibt" style="left:139px;top:565px;width:25px;height:24px;"></div>
<svg style="left:47px;top:568px" width="19" height="16" viewBox="0 0 19 16"><path d="M1.5 14 V4.5 H5.5 L6.5 6.5 H12.5 V8.5" fill="#f6f2a8" stroke="#000" stroke-width="1"/><path d="M1.5 14.5 L4.5 8.5 H17 L13.5 14.5 Z" fill="#8a8a34" stroke="#000" stroke-width="1"/><path d="M9.5 3.5 Q12.5 0.5 15.5 3.8" stroke="#000" fill="none" stroke-width="1"/><path d="M16.5 1.5 V5 H13" stroke="#000" fill="none" stroke-width="1"/></svg>
<svg style="left:96px;top:568px" width="18" height="18"><path d="M1.5 1.5 Q6 5 8.5 8.5 T16 16 M15.5 1 Q10 6 8 8.8 T2 16" stroke="#d83238" stroke-width="1.9" fill="none" stroke-linecap="round"/></svg>
<svg style="left:145px;top:569px" width="15" height="15" viewBox="0 0 15 15"><rect x="0.5" y="0.5" width="13" height="13" fill="#4c4a1c" stroke="#000"/><rect x="3" y="1" width="8" height="6" fill="#c8c8c8"/><rect x="11.2" y="1.5" width="1.3" height="2" fill="#c8c8a0"/><rect x="3" y="9" width="8" height="4.5" fill="#0a0a0a"/><rect x="7.5" y="10" width="2.2" height="3" fill="#d8dcf8"/><rect x="4.5" y="10.5" width="2" height="2" fill="#303070"/></svg>
<div class="sunk" style="left:243px;top:558px;width:192px;height:19px;"></div>
<div class="t" style="left:247px;top:561px;transform:scaleX(0.87);transform-origin:0 0;font-size:12px;">Magnitude (continue)</div>
<div class="btn" style="left:417px;top:560px;width:16px;height:15px;"></div>
<svg style="left:0;top:0" width="855" height="700"><path d="M421 565 L425 569 L429 565 Z" fill="#000"/></svg>
<div class="cb" style="left:243px;top:583px;width:13px;height:13px;"></div>
<svg style="left:243px;top:583px" width="13" height="13" shape-rendering="crispEdges"><path d="M3 5h1v3h-1z M4 6h1v3h-1z M5 7h1v3h-1z M6 6h1v3h-1z M7 5h1v3h-1z M8 4h1v3h-1z M9 3h1v3h-1z" fill="#000"/></svg>
<div class="t" style="left:269px;top:582px;transform:scaleX(0.96);transform-origin:0 0;font-weight:bold;color:#8080e0;">Epaisseur de ligne</div>
<div class="trk" style="left:379px;top:581px;width:49px;height:17px;"></div>
<div class="btn" style="left:379px;top:581px;width:17px;height:17px;"></div>
<svg style="left:0;top:0" width="855" height="700"><path d="M388.0 585.5 L384.0 589.5 L388.0 593.5 Z" fill="#000"/></svg>
<div class="btn" style="left:411px;top:581px;width:17px;height:17px;"></div>
<svg style="left:0;top:0" width="855" height="700"><path d="M418.0 585.5 L422.0 589.5 L418.0 593.5 Z" fill="#000"/></svg>
<div class="btn" style="left:400px;top:581px;width:8px;height:17px;"></div>
<div class="t" style="left:430px;top:582px;transform:scaleX(0.9);transform-origin:0 0;">2</div>
<div class="t" style="left:44px;top:625px;transform:scaleX(0.87);transform-origin:0 0;">Type de Fenêtre</div>
<div class="sunk" style="left:43px;top:642px;width:127px;height:19px;"></div>
<div class="t" style="left:47px;top:645px;transform:scaleX(0.87);transform-origin:0 0;font-size:12px;">None</div>
<div class="btn" style="left:152px;top:644px;width:16px;height:15px;"></div>
<svg style="left:0;top:0" width="855" height="700"><path d="M156 649 L160 653 L164 649 Z" fill="#000"/></svg>
<div class="cb" style="left:179px;top:643px;width:13px;height:13px;"></div>
<div class="t" style="left:197px;top:643px;transform:scaleX(0.93);transform-origin:0 0;">Moving Av.</div>
<div class="t" style="left:339px;top:625px;transform:scaleX(0.87);transform-origin:0 0;">Resolution</div>
<div class="t" style="left:438.5px;top:625px;transform:scaleX(0.9);transform-origin:0 0;">1</div>
<div class="trk" style="left:339px;top:641px;width:105px;height:17px;"></div>
<div class="btn" style="left:339px;top:641px;width:17px;height:17px;"></div>
<svg style="left:0;top:0" width="855" height="700"><path d="M348.0 645.5 L344.0 649.5 L348.0 653.5 Z" fill="#000"/></svg>
<div class="btn" style="left:427px;top:641px;width:17px;height:17px;"></div>
<svg style="left:0;top:0" width="855" height="700"><path d="M434.0 645.5 L438.0 649.5 L434.0 653.5 Z" fill="#000"/></svg>
<div class="btn" style="left:356px;top:641px;width:14px;height:17px;"></div>
<div class="" style="left:475px;top:449px;width:345px;height:197px;background:#fff;border:1px solid #000;"></div>
<div class="" style="left:478px;top:452px;width:11px;height:11px;background:#fff;border:1px solid #8c8c8c;"></div>
<svg style="left:478px;top:452px" width="11" height="11" shape-rendering="crispEdges"><path d="M2 4h1v3h-1z M3 5h1v3h-1z M4 6h1v3h-1z M5 5h1v3h-1z M6 4h1v3h-1z M7 3h1v3h-1z M8 2h1v3h-1z" fill="#000"/></svg>
<div class="t" style="left:493px;top:450px;transform:scaleX(0.9);transform-origin:0 0;color:#000;">1</div>
<div class="t" style="left:524px;top:450px;transform:scaleX(0.9);transform-origin:0 0;color:#000;">478.7</div>
<div class="t" style="left:572px;top:450px;transform:scaleX(0.87);transform-origin:0 0;color:#000;">Worm Drive</div>
<div class="" style="left:478px;top:467px;width:11px;height:11px;background:#fff;border:1px solid #8c8c8c;"></div>
<svg style="left:478px;top:467px" width="11" height="11" shape-rendering="crispEdges"><path d="M2 4h1v3h-1z M3 5h1v3h-1z M4 6h1v3h-1z M5 5h1v3h-1z M6 4h1v3h-1z M7 3h1v3h-1z M8 2h1v3h-1z" fill="#000"/></svg>
<div class="t" style="left:493px;top:465px;transform:scaleX(0.9);transform-origin:0 0;color:#000;">2</div>
<div class="t" style="left:524px;top:465px;transform:scaleX(0.9);transform-origin:0 0;color:#000;">366.6</div>
<div class="t" style="left:572px;top:465px;transform:scaleX(0.87);transform-origin:0 0;color:#000;">Transfer Gear</div>
<div class="" style="left:478px;top:482px;width:11px;height:11px;background:#fff;border:1px solid #b4b4b4;"></div>
<div class="t" style="left:493px;top:480px;transform:scaleX(0.9);transform-origin:0 0;color:#000;">3</div>
<div class="t" style="left:524px;top:480px;transform:scaleX(0.9);transform-origin:0 0;color:#000;">182.2</div>
<div class="t" style="left:572px;top:480px;transform:scaleX(0.87);transform-origin:0 0;color:#000;">Transfer Gear 2nd harmonic</div>
<div class="" style="left:491px;top:495px;width:328px;height:15px;background:#316ac5;"></div>
<div class="" style="left:478px;top:497px;width:11px;height:11px;background:#fff;border:1px solid #8c8c8c;"></div>
<svg style="left:478px;top:497px" width="11" height="11" shape-rendering="crispEdges"><path d="M2 4h1v3h-1z M3 5h1v3h-1z M4 6h1v3h-1z M5 5h1v3h-1z M6 4h1v3h-1z M7 3h1v3h-1z M8 2h1v3h-1z" fill="#000"/></svg>
<div class="t" style="left:493px;top:495px;transform:scaleX(0.9);transform-origin:0 0;color:#fff;">4</div>
<div class="t" style="left:524px;top:495px;transform:scaleX(0.9);transform-origin:0 0;color:#fff;">174</div>
<div class="t" style="left:572px;top:495px;transform:scaleX(0.87);transform-origin:0 0;color:#fff;">Worm bearing ball</div>
<div class="" style="left:478px;top:512px;width:11px;height:11px;background:#fff;border:1px solid #8c8c8c;"></div>
<svg style="left:478px;top:512px" width="11" height="11" shape-rendering="crispEdges"><path d="M2 4h1v3h-1z M3 5h1v3h-1z M4 6h1v3h-1z M5 5h1v3h-1z M6 4h1v3h-1z M7 3h1v3h-1z M8 2h1v3h-1z" fill="#000"/></svg>
<div class="t" style="left:493px;top:510px;transform:scaleX(0.9);transform-origin:0 0;color:#000;">5</div>
<div class="t" style="left:524px;top:510px;transform:scaleX(0.9);transform-origin:0 0;color:#000;">122</div>
<div class="t" style="left:572px;top:510px;transform:scaleX(0.87);transform-origin:0 0;color:#000;">Stepper Gear</div>
<div class="" style="left:478px;top:527px;width:11px;height:11px;background:#fff;border:1px solid #b4b4b4;"></div>
<div class="t" style="left:493px;top:525px;transform:scaleX(0.9);transform-origin:0 0;color:#000;">6</div>
<div class="t" style="left:524px;top:525px;transform:scaleX(0.9);transform-origin:0 0;color:#000;">10.2</div>
<div class="t" style="left:572px;top:525px;transform:scaleX(0.87);transform-origin:0 0;color:#000;">Gear Mesh Period</div>
<div class="" style="left:478px;top:542px;width:11px;height:11px;background:#fff;border:1px solid #8c8c8c;"></div>
<svg style="left:478px;top:542px" width="11" height="11" shape-rendering="crispEdges"><path d="M2 4h1v3h-1z M3 5h1v3h-1z M4 6h1v3h-1z M5 5h1v3h-1z M6 4h1v3h-1z M7 3h1v3h-1z M8 2h1v3h-1z" fill="#000"/></svg>
<div class="t" style="left:493px;top:540px;transform:scaleX(0.9);transform-origin:0 0;color:#000;">7</div>
<div class="t" style="left:524px;top:540px;transform:scaleX(0.9);transform-origin:0 0;color:#000;">239.4</div>
<div class="t" style="left:572px;top:540px;transform:scaleX(0.87);transform-origin:0 0;color:#000;">Worm 2nd harmonic</div>
<div class="" style="left:478px;top:557px;width:11px;height:11px;background:#fff;border:1px solid #b4b4b4;"></div>
<div class="t" style="left:493px;top:555px;transform:scaleX(0.9);transform-origin:0 0;color:#000;">8</div>
<div class="t" style="left:524px;top:555px;transform:scaleX(0.9);transform-origin:0 0;color:#000;">159.6</div>
<div class="t" style="left:572px;top:555px;transform:scaleX(0.87);transform-origin:0 0;color:#000;">Worm 3rd harmonic</div>
<div class="" style="left:478px;top:572px;width:11px;height:11px;background:#fff;border:1px solid #b4b4b4;"></div>
<div class="t" style="left:493px;top:570px;transform:scaleX(0.9);transform-origin:0 0;color:#000;">9</div>
<div class="t" style="left:524px;top:570px;transform:scaleX(0.9);transform-origin:0 0;color:#000;">119.7</div>
<div class="t" style="left:572px;top:570px;transform:scaleX(0.87);transform-origin:0 0;color:#000;">Worm 4th harmonic</div>
<div class="" style="left:478px;top:587px;width:11px;height:11px;background:#fff;border:1px solid #b4b4b4;"></div>
<div class="t" style="left:493px;top:585px;transform:scaleX(0.9);transform-origin:0 0;color:#000;">10</div>
<div class="t" style="left:524px;top:585px;transform:scaleX(0.9);transform-origin:0 0;color:#000;">95.7</div>
<div class="t" style="left:572px;top:585px;transform:scaleX(0.87);transform-origin:0 0;color:#000;">Worm 5th harmonic</div>
<div class="" style="left:478px;top:602px;width:11px;height:11px;background:#fff;border:1px solid #8c8c8c;"></div>
<svg style="left:478px;top:602px" width="11" height="11" shape-rendering="crispEdges"><path d="M2 4h1v3h-1z M3 5h1v3h-1z M4 6h1v3h-1z M5 5h1v3h-1z M6 4h1v3h-1z M7 3h1v3h-1z M8 2h1v3h-1z" fill="#000"/></svg>
<div class="t" style="left:493px;top:600px;transform:scaleX(0.9);transform-origin:0 0;color:#000;">11</div>
<div class="t" style="left:524px;top:600px;transform:scaleX(0.9);transform-origin:0 0;color:#000;">79.8</div>
<div class="t" style="left:572px;top:600px;transform:scaleX(0.87);transform-origin:0 0;color:#000;">Worm 6th harmonic</div>
<div class="" style="left:478px;top:617px;width:11px;height:11px;background:#fff;border:1px solid #b4b4b4;"></div>
<div class="t" style="left:493px;top:615px;transform:scaleX(0.9);transform-origin:0 0;color:#000;">12</div>
<div class="t" style="left:524px;top:615px;transform:scaleX(0.9);transform-origin:0 0;color:#000;">68.3</div>
<div class="t" style="left:572px;top:615px;transform:scaleX(0.87);transform-origin:0 0;color:#000;">Worm 7th harmonic</div>
<div class="" style="left:478px;top:632px;width:11px;height:11px;background:#fff;border:1px solid #8c8c8c;"></div>
<svg style="left:478px;top:632px" width="11" height="11" shape-rendering="crispEdges"><path d="M2 4h1v3h-1z M3 5h1v3h-1z M4 6h1v3h-1z M5 5h1v3h-1z M6 4h1v3h-1z M7 3h1v3h-1z M8 2h1v3h-1z" fill="#000"/></svg>
<div class="t" style="left:493px;top:630px;transform:scaleX(0.9);transform-origin:0 0;color:#000;">13</div>
<div class="t" style="left:524px;top:630px;transform:scaleX(0.9);transform-origin:0 0;color:#000;">59.9</div>
<div class="t" style="left:572px;top:630px;transform:scaleX(0.87);transform-origin:0 0;color:#000;">Worm 8th harmonic</div>
<div class="cb" style="left:475px;top:649px;width:13px;height:13px;"></div>
<svg style="left:475px;top:649px" width="13" height="13" shape-rendering="crispEdges"><path d="M3 5h1v3h-1z M4 6h1v3h-1z M5 7h1v3h-1z M6 6h1v3h-1z M7 5h1v3h-1z M8 4h1v3h-1z M9 3h1v3h-1z" fill="#000"/></svg>
<div class="t" style="left:494px;top:649px;transform:scaleX(0.87);transform-origin:0 0;">Show</div>
</div></body></html>
